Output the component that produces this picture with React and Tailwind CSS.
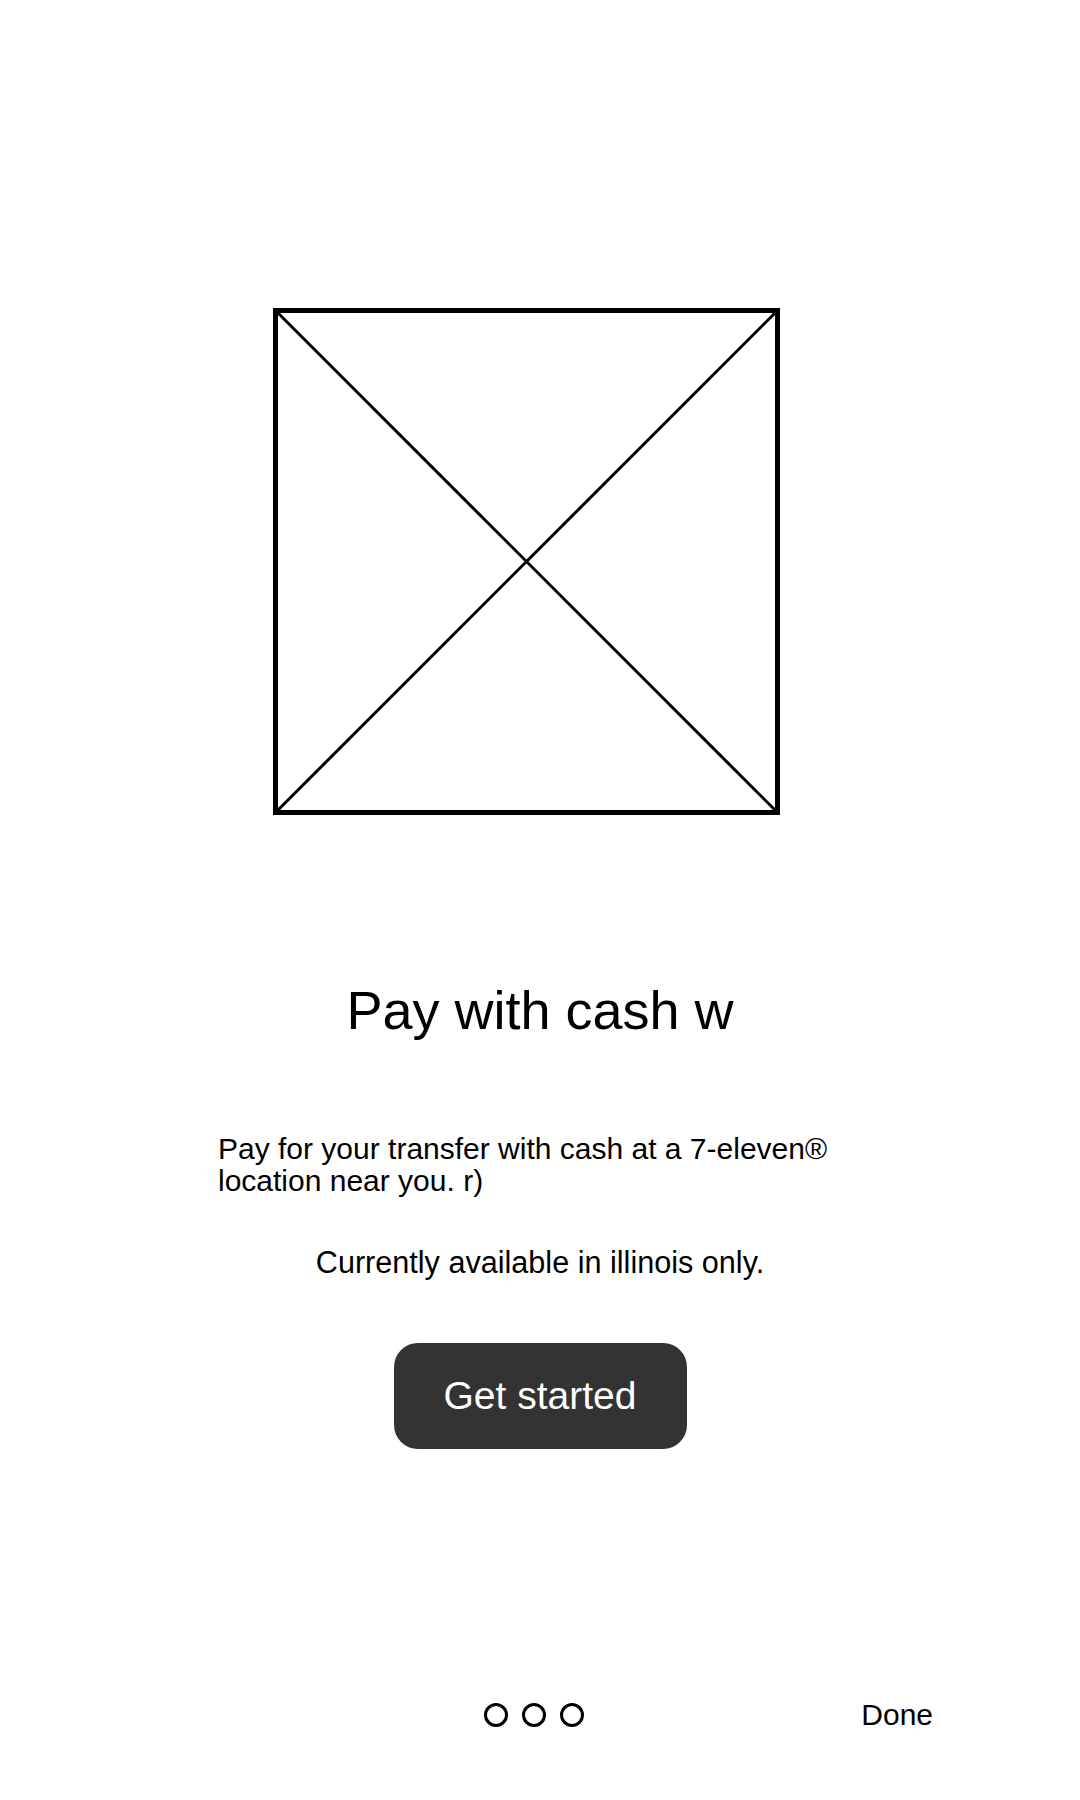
const PlaceholderImage = () => (
  <svg width="507" height="507" viewBox="0 0 507 507" className="block">
    <rect x="2.5" y="2.5" width="502" height="502" fill="none" stroke="#000" strokeWidth="5" />
    <line x1="3" y1="3" x2="504" y2="504" stroke="#000" strokeWidth="3" />
    <line x1="504" y1="3" x2="3" y2="504" stroke="#000" strokeWidth="3" />
  </svg>
);

const App = () => {
  return (
    <div className="w-[1080px] h-[1800px] bg-white text-black font-['Liberation_Sans',Arial,sans-serif] flex flex-col pt-[308px]">
      <div className="ml-[273px]">
        <PlaceholderImage />
      </div>

      <h1 className="mt-[164px] text-center text-[54px] leading-[62px] font-normal">Pay with cash w</h1>

      <p className="mt-[92px] ml-[218px] w-[640px] text-[30px] leading-[32px]">
        Pay for your transfer with cash at a 7-eleven® location near you. r)
      </p>

      <p className="mt-[47px] text-center text-[30.6px] leading-[36px]">Currently available in illinois only.</p>

      <button className="mt-[63px] mx-auto w-[293px] h-[106px] rounded-[24px] bg-[#333333] text-white text-[39px]">
        Get started
      </button>

      <div className="mt-[248px] h-[36px] flex items-center">
        <div className="ml-[484px] flex gap-[14px]">
          <span className="w-[24px] h-[24px] rounded-full border-[3px] border-black" />
          <span className="w-[24px] h-[24px] rounded-full border-[3px] border-black" />
          <span className="w-[24px] h-[24px] rounded-full border-[3px] border-black" />
        </div>
        <span className="ml-auto mr-[147px] text-[30px] leading-[36px]">Done</span>
      </div>
    </div>
  );
};

export default App;
